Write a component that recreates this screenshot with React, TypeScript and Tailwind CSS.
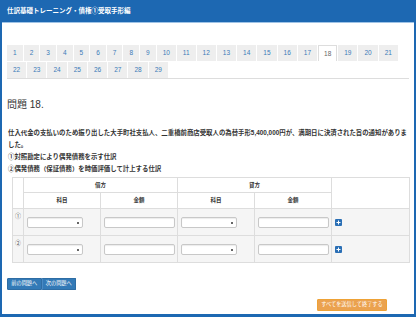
import React from "react";

function Select({ className = "" }: { className?: string }) {
  return (
    <div
      className={`relative h-[11px] w-[56px] rounded-[2px] border border-[#c8c8c8] bg-white shadow-[inset_0_1px_1px_rgba(0,0,0,0.08)] ${className}`}
    >
      <span className="absolute right-[3px] top-[4px] h-[2px] w-[2px] rounded-full bg-[#333]" />
    </div>
  );
}

function Input() {
  return (
    <div className="h-[11px] w-[71px] rounded-[2px] border border-[#c8c8c8] bg-white shadow-[inset_0_1px_1px_rgba(0,0,0,0.08)]" />
  );
}

function Plus() {
  return (
    <div className="flex h-[7px] w-[7px] items-center justify-center rounded-[1px] bg-[#2a6fb5]">
      <svg width="5" height="5" viewBox="0 0 5 5">
        <rect x="2" y="0.5" width="1" height="4" fill="#fff" />
        <rect x="0.5" y="2" width="4" height="1" fill="#fff" />
      </svg>
    </div>
  );
}

export default function App() {
  const tabs = Array.from({ length: 29 }, (_, i) => i + 1);
  const rows = ["①", "②"];
  return (
    <div className="flex h-[317px] w-[416px] flex-col overflow-hidden bg-[#1d68b2] pb-[3px] pl-[2px] pr-[2px] font-['Liberation_Sans','Noto_Sans_CJK_JP',sans-serif] text-[#333]">
      <div className="flex h-[22px] items-center pl-[5px] text-[6.5px] font-bold text-white">
        仕訳基礎トレーニング・債権①受取手形編
      </div>
      <div className="flex flex-1 flex-col border-t border-[#9fc3e6] bg-white pl-[5px] pt-[22px]">
        <div className="flex w-[402px] flex-wrap gap-y-[1px] border-b border-[#ddd]">
          {tabs.map((t) =>
            t === 18 ? (
              <div
                key={t}
                className="mr-[1px] flex h-[16px] items-center border border-b-0 border-[#ddd] bg-white px-[5px] text-[6.5px] text-[#666]"
              >
                {t}
              </div>
            ) : (
              <div
                key={t}
                className="mr-[1px] flex h-[16px] items-center bg-[#eee] px-[6px] text-[6.5px] text-[#3a7ab8]"
              >
                {t}
              </div>
            )
          )}
        </div>

        <div className="mt-[20px] h-[12px] text-[10px] leading-[12px] text-[#333]">
          問題 18.
        </div>

        <div className="mt-[16px] whitespace-nowrap pl-[1px] text-[6.4px] font-bold leading-[12px] text-[#333]">
          <div>
            仕入代金の支払いのため振り出した大手町社支払人、二重橋前商店受取人の為替手形5,400,000円が、満期日に決済された旨の通知がありま
          </div>
          <div>した。</div>
          <div>①対照勘定により偶発債務を示す仕訳</div>
          <div>②偶発債務（保証債務）を時価評価して計上する仕訳</div>
        </div>

        <table className="ml-[5px] mt-[2px] w-[397px] table-fixed border-collapse border border-[#ddd] text-[5.5px] font-bold text-[#333]">
          <colgroup>
            <col className="w-[11px]" />
            <col className="w-[77px]" />
            <col className="w-[77px]" />
            <col className="w-[77px]" />
            <col className="w-[77px]" />
            <col className="w-[78px]" />
          </colgroup>
          <thead>
            <tr className="h-[15px]">
              <th rowSpan={2} className="border border-[#ddd]" />
              <th colSpan={2} className="border border-[#ddd] text-center">
                借方
              </th>
              <th colSpan={2} className="border border-[#ddd] text-center">
                貸方
              </th>
              <th rowSpan={2} className="border border-[#ddd]" />
            </tr>
            <tr className="h-[16px]">
              <th className="border border-[#ddd] text-center">科目</th>
              <th className="border border-[#ddd] text-center">金額</th>
              <th className="border border-[#ddd] text-center">科目</th>
              <th className="border border-[#ddd] text-center">金額</th>
            </tr>
          </thead>
          <tbody>
            {rows.map((r) => (
              <tr key={r} className="h-[27px] bg-[#f5f5f5]">
                <td className="border border-[#ddd] pt-[3px] text-center align-top text-[6px] font-normal text-[#555]">
                  {r}
                </td>
                <td className="border border-[#ddd] px-[3px] align-middle">
                  <Select />
                </td>
                <td className="border border-[#ddd] px-[3px] align-middle">
                  <Input />
                </td>
                <td className="border border-[#ddd] px-[3px] align-middle">
                  <Select />
                </td>
                <td className="border border-[#ddd] px-[3px] align-middle">
                  <Input />
                </td>
                <td className="border border-[#ddd] px-[3px] align-middle">
                  <Plus />
                </td>
              </tr>
            ))}
          </tbody>
        </table>

        <div className="mt-[15px] flex h-[12px] w-[69px]">
          <div className="flex flex-1 items-center justify-center rounded-l-[1px] border border-[#2e6da4] bg-[#337ab7] text-[5.2px] text-white">
            前の問題へ
          </div>
          <div className="flex flex-1 items-center justify-center rounded-r-[1px] border border-l-[#4a8ac4] border-[#2e6da4] bg-[#337ab7] text-[5.2px] text-white">
            次の問題へ
          </div>
        </div>

        <div className="mt-[9px] flex">
          <div className="ml-auto mr-[27px] flex h-[12px] w-[70px] items-center justify-center rounded-[1px] border border-[#eea236] bg-[#eba24f] text-[5.2px] text-white">
            すべてを送信して終了する
          </div>
        </div>
      </div>
    </div>
  );
}
